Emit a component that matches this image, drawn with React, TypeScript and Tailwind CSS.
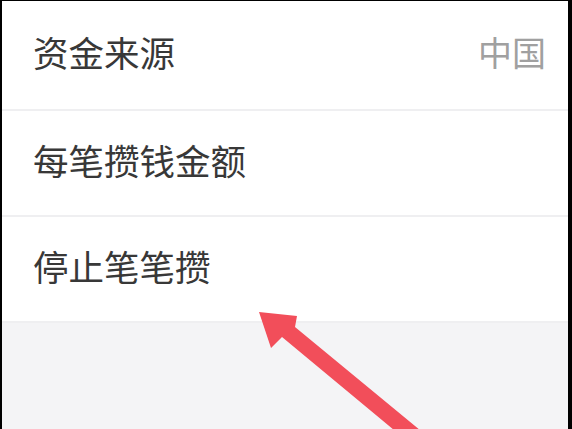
const rows = [
  { label: "资金来源", value: "中国", h: "h-[110px]" },
  { label: "每笔攒钱金额", value: "", h: "h-[106px]" },
  { label: "停止笔笔攒", value: "", h: "h-[106px]" },
]

export default function App() {
  return (
    <div
      className="relative w-[572px] h-[429px] overflow-hidden bg-[#f4f4f6] border-l-2 border-t border-r-4 border-black"
      style={{ fontFamily: '"Noto Sans CJK SC", "Noto Sans", sans-serif' }}
    >
      <div className="bg-white">
        {rows.map((r) => (
          <div
            key={r.label}
            className={`${r.h} flex items-center justify-between pl-[31px] pr-[22px] pb-[6px] border-b-2 border-[#efeff1]`}
          >
            <span className="text-[35.5px] leading-none text-[#383838]">{r.label}</span>
            {r.value && <span className="text-[34px] leading-none text-[#a0a0a0]">{r.value}</span>}
          </div>
        ))}
      </div>

      {/* annotation arrow */}
      <svg className="absolute left-[-2px] top-[-1px]" width="572" height="429" viewBox="0 0 572 429">
        <polygon
          points="259,312 297,316 295,327 432,440 406,440 282,337 271,348"
          fill="#f24e5a"
        />
      </svg>
    </div>
  )
}
